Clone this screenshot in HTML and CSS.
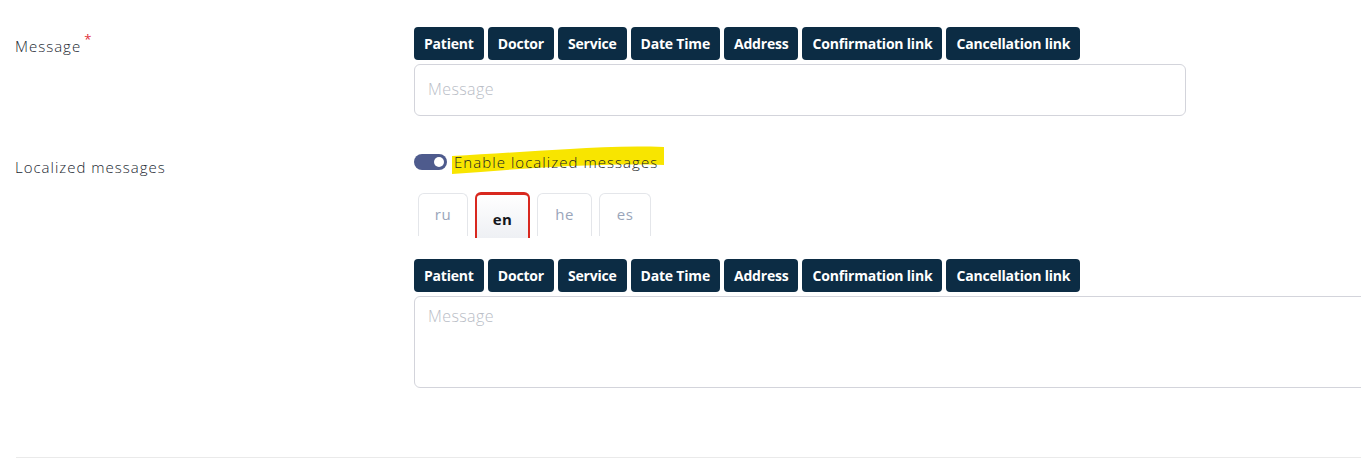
FILE: index.html
```html
<!DOCTYPE html>
<html lang="en">
<head>
<meta charset="utf-8">
<title>Message form</title>
<link rel="stylesheet" href="styles.css">
</head>
<body>
<div class="page">
  <div class="row row-message">
    <div class="label">Message<span class="req">*</span></div>
    <div class="field">
      <div class="chips">
        <button class="chip">Patient</button>
        <button class="chip">Doctor</button>
        <button class="chip">Service</button>
        <button class="chip">Date Time</button>
        <button class="chip">Address</button>
        <button class="chip">Confirmation link</button>
        <button class="chip">Cancellation link</button>
      </div>
      <div class="input">Message</div>
    </div>
  </div>

  <div class="row row-local">
    <div class="label label-local">Localized messages</div>
    <div class="field">
      <div class="toggle-line">
        <span class="toggle"><span class="knob"></span></span>
        <span class="toggle-text">
          <svg class="marker" width="216" height="32" viewBox="0 0 216 32" aria-hidden="true">
            <path d="M2 11 C40 9 80 6 120 4 C150 2 180 1 214 2 L214 20 C180 19 150 20 120 21 C80 23 40 26 2 29 Z" fill="#f8e500"/>
          </svg>
          <span class="tt">Enable localized messages</span>
        </span>
      </div>
      <div class="tabs">
        <div class="tab">ru</div>
        <div class="tab active">en</div>
        <div class="tab">he</div>
        <div class="tab">es</div>
      </div>
      <div class="chips chips2">
        <button class="chip">Patient</button>
        <button class="chip">Doctor</button>
        <button class="chip">Service</button>
        <button class="chip">Date Time</button>
        <button class="chip">Address</button>
        <button class="chip">Confirmation link</button>
        <button class="chip">Cancellation link</button>
      </div>
      <div class="textarea">Message</div>
    </div>
  </div>
  <div class="divider"></div>
</div>
</body>
</html>
```

FILE: styles.css
```css
html, body {
  margin: 0;
  padding: 0;
  background: #ffffff;
  overflow: hidden;
}
body {
  font-family: "Open Sans", "Noto Sans", sans-serif;
  color: #2b2f3a;
}
.page {
  width: 1361px;
  height: 471px;
  padding-top: 27px;
  box-sizing: border-box;
}
.row {
  display: grid;
  grid-template-columns: 399px 1fr;
  padding-left: 15px;
}
.label {
  font-size: 15px;
  font-weight: 300;
  color: #20252f;
  padding-top: 9px;
  letter-spacing: 1px;
}
.req {
  color: #e0303a;
  font-size: 13px;
  font-weight: 400;
  position: relative;
  top: -8px;
  margin-left: 3px;
}
.chips {
  display: flex;
  gap: 4px;
  height: 33px;
}
.chip {
  background: #0c2c44;
  color: #ffffff;
  border: none;
  border-radius: 4px;
  font-family: "Open Sans", "Noto Sans", sans-serif;
  font-weight: 700;
  font-size: 14px;
  padding: 0 10px;
  height: 33px;
  margin: 0;
  letter-spacing: -0.2px;
}
.input {
  margin-top: 4px;
  width: 772px;
  height: 52px;
  box-sizing: border-box;
  border: 1px solid #d3d4db;
  border-radius: 6px;
  padding: 13px 13px;
  font-size: 16px;
  font-weight: 300;
  letter-spacing: 0.4px;
  color: #b9bdc6;
}
.row-local {
  margin-top: 38px;
}
.label-local {
  padding-top: 3px;
}
.toggle-line {
  display: flex;
  align-items: center;
  gap: 7px;
  height: 16px;
}
.toggle {
  width: 33px;
  height: 16px;
  background: #4e5b8d;
  border-radius: 8px;
  position: relative;
  display: inline-block;
}
.knob {
  position: absolute;
  right: 3px;
  top: 3px;
  width: 10px;
  height: 10px;
  background: #ffffff;
  border-radius: 50%;
}
.toggle-text {
  position: relative;
  font-size: 15px;
  font-weight: 300;
  color: #161b25;
  letter-spacing: 1.05px;
}
.marker {
  position: absolute;
  left: -4px;
  top: -7px;
}
.tt {
  position: relative;
}
.tabs {
  display: flex;
  gap: 7px;
  margin-top: 22px;
  padding-left: 4px;
  height: 45px;
  align-items: flex-start;
}
.tab {
  width: 50px;
  height: 43px;
  margin-top: 1px;
  padding-bottom: 3px;
  box-sizing: border-box;
  border: 1px solid #e4e6ea;
  border-bottom: none;
  border-radius: 6px 6px 0 0;
  display: flex;
  align-items: center;
  justify-content: center;
  font-size: 15px;
  font-weight: 400;
  letter-spacing: 0.5px;
  color: #9aa5ba;
}
.tab.active {
  width: 55px;
  height: 46px;
  margin-top: 0;
  border: 2px solid #d8281f;
  border-top-width: 3px;
  border-bottom: none;
  background: linear-gradient(#ffffff, #eef0f4);
  color: #14161c;
  font-weight: 700;
  padding-top: 4px;
  padding-bottom: 0;
}
.tab:nth-child(3) { width: 55px; }
.tab:nth-child(4) { width: 52px; }
.chips2 {
  margin-top: 22px;
}
.textarea {
  margin-top: 4px;
  width: 960px;
  height: 92px;
  box-sizing: border-box;
  border: 1px solid #d3d4db;
  border-radius: 6px;
  padding: 8px 13px;
  font-size: 16px;
  font-weight: 300;
  letter-spacing: 0.4px;
  color: #b9bdc6;
}
.divider {
  margin-top: 69px;
  margin-left: 16px;
  height: 1px;
  background: #eaeaea;
}
```
